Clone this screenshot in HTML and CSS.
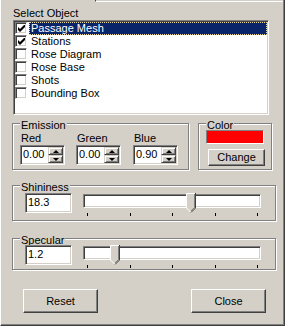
FILE: index.html
```html
<!DOCTYPE html>
<html lang="en">
<head>
  <meta charset="UTF-8" />
  <title>Material</title>
  <link rel="stylesheet" href="styles.css">
</head>
<body>

  <div class="dialog">
    <div class="tab-edge"></div>

    <div class="caption">Select Object</div>
    <div class="listbox">
      <div class="item">
        <span class="check"><svg viewBox="0 0 7 7" width="7" height="7"><polygon points="0,2 2,4 6,0 7,0 7,2 2,7 0,5" /></svg></span>
        <span class="item-label selected">Passage Mesh</span>
      </div>
      <div class="item">
        <span class="check"><svg viewBox="0 0 7 7" width="7" height="7"><polygon points="0,2 2,4 6,0 7,0 7,2 2,7 0,5" /></svg></span>
        <span class="item-label">Stations</span>
      </div>
      <div class="item"><span class="check"></span><span class="item-label">Rose Diagram</span></div>
      <div class="item"><span class="check"></span><span class="item-label">Rose Base</span></div>
      <div class="item"><span class="check"></span><span class="item-label">Shots</span></div>
      <div class="item"><span class="check"></span><span class="item-label">Bounding Box</span></div>
    </div>

    <div class="row">
      <div class="group emission">
        <div class="group-title">Emission</div>
        <div class="fields">
          <div class="field">
            <div class="field-label">Red</div>
            <div class="spin">
              <span class="spin-value">0.00</span>
              <span class="spin-btns"><span class="spin-btn up"></span><span class="spin-btn down"></span></span>
            </div>
          </div>
          <div class="field">
            <div class="field-label">Green</div>
            <div class="spin">
              <span class="spin-value">0.00</span>
              <span class="spin-btns"><span class="spin-btn up"></span><span class="spin-btn down"></span></span>
            </div>
          </div>
          <div class="field">
            <div class="field-label">Blue</div>
            <div class="spin">
              <span class="spin-value">0.90</span>
              <span class="spin-btns"><span class="spin-btn up"></span><span class="spin-btn down"></span></span>
            </div>
          </div>
        </div>
      </div>

      <div class="group color">
        <div class="group-title">Color</div>
        <div class="swatch"></div>
        <button class="btn change">Change</button>
      </div>
    </div>

    <div class="group slider-group shininess">
      <div class="group-title">Shininess</div>
      <div class="slider-row">
        <div class="edit">18.3</div>
        <div class="track">
          <div class="channel"></div>
          <div class="ticks"><i></i><i></i><i></i><i></i><i></i></div>
          <svg class="thumb" style="left: 103px" viewBox="0 0 10 20" width="10" height="20">
            <polygon points="0,0 10,0 10,15 5,20 0,15" fill="#d4d0c8" />
            <polyline points="0.5,15 0.5,0.5 9,0.5" stroke="#fff" fill="none" />
            <polyline points="0.5,15 5,19.5" stroke="#fff" fill="none" />
            <polyline points="9.5,0 9.5,15 5,19.5" stroke="#404040" fill="none" />
            <polyline points="8.5,1 8.5,14.5 5,18" stroke="#808080" fill="none" />
          </svg>
        </div>
      </div>
    </div>

    <div class="group slider-group specular">
      <div class="group-title">Specular</div>
      <div class="slider-row">
        <div class="edit">1.2</div>
        <div class="track">
          <div class="channel"></div>
          <div class="ticks"><i></i><i></i><i></i><i></i><i></i></div>
          <svg class="thumb" style="left: 27px" viewBox="0 0 10 20" width="10" height="20">
            <polygon points="0,0 10,0 10,15 5,20 0,15" fill="#d4d0c8" />
            <polyline points="0.5,15 0.5,0.5 9,0.5" stroke="#fff" fill="none" />
            <polyline points="0.5,15 5,19.5" stroke="#fff" fill="none" />
            <polyline points="9.5,0 9.5,15 5,19.5" stroke="#404040" fill="none" />
            <polyline points="8.5,1 8.5,14.5 5,18" stroke="#808080" fill="none" />
          </svg>
        </div>
      </div>
    </div>

    <div class="actions">
      <button class="btn action">Reset</button>
      <button class="btn action">Close</button>
    </div>
  </div>

</body>
</html>
```

FILE: styles.css
```css
* {
  box-sizing: border-box;
}
body {
  margin: 0;
  background: #d4d0c8;
  font-family: 'Liberation Sans', Arial, sans-serif;
  font-size: 11px;
  color: #000;
}
.dialog {
  width: 285px;
  height: 326px;
  border-left: 1px solid #fff;
  border-right: 1px solid #404040;
  border-bottom: 1px solid #404040;
  box-shadow: inset -1px -1px #808080;
  padding-left: 11px;
}
.tab-edge {
  height: 2px;
  margin: 0 1px 0 83px;
  border-left: 1px solid #404040;
  border-bottom: 1px solid #fff;
}
.caption {
  margin: 5px 0 0 1px;
  line-height: 13px;
}

/* sunken white boxes */
.listbox, .spin, .edit, .channel, .check {
  background: #fff;
  border: 1px solid;
  border-color: #808080 #fff #fff #808080;
  box-shadow: inset 1px 1px #404040, inset -1px -1px #d4d0c8;
}

.listbox {
  width: 256px;
  height: 95px;
  margin-left: 1px;
  padding: 1px;
}
.item {
  display: flex;
  gap: 2px;
  height: 13px;
}
.check {
  flex: none;
  width: 12px;
  height: 12px;
  display: flex;
  align-items: center;
  justify-content: center;
}
.check svg {
  fill: #000;
}
.item-label {
  flex: 1;
  height: 13px;
  border: 1px dotted transparent;
  padding-left: 1px;
  line-height: 11px;
  white-space: nowrap;
}
.item-label.selected {
  background: #0a246a;
  color: #fff;
  border-color: #f0dc98;
}

/* group boxes */
.row {
  display: flex;
  gap: 9px;
  margin-top: 8px;
}
.group {
  border: 1px solid #808080;
  box-shadow: inset 1px 1px #fff, 1px 1px #fff;
}
.group-title {
  width: fit-content;
  margin: -5px 0 0 7px;
  padding: 0 1px;
  background: #d4d0c8;
  line-height: 13px;
}
.emission {
  width: 177px;
  height: 47px;
  padding: 0 0 4px 7px;
}
.emission .group-title {
  margin-left: 0;
}
.color {
  width: 74px;
  height: 47px;
  padding: 0 0 3px 7px;
}
.color .group-title {
  margin-left: 0;
}

.fields {
  display: grid;
  grid-template-columns: 56px 57px 45px;
}
.field-label {
  padding-left: 1px;
  line-height: 13px;
}
.spin {
  display: flex;
  width: 45px;
  height: 20px;
  padding: 1px;
}
.spin-value {
  flex: 1;
  padding: 1px 0 0 1px;
  line-height: 13px;
}
.spin-btns {
  display: flex;
  flex-direction: column;
  width: 15px;
}
.spin-btn {
  flex: 1;
  display: flex;
  align-items: center;
  justify-content: center;
  background: #d4d0c8;
  border: 1px solid;
  border-color: #d4d0c8 #404040 #404040 #d4d0c8;
  box-shadow: inset 1px 1px #fff, inset -1px -1px #808080;
}
.spin-btn::after {
  content: "";
  width: 0;
  height: 0;
  border-left: 3px solid transparent;
  border-right: 3px solid transparent;
}
.spin-btn.up::after {
  border-bottom: 3px solid #000;
}
.spin-btn.down::after {
  border-top: 3px solid #000;
}

.swatch {
  width: 58px;
  height: 14px;
  margin-top: -2px;
  background: #ff0000;
  border: 1px solid;
  border-color: #808080 #fff #fff #808080;
}

.btn {
  display: flex;
  align-items: center;
  justify-content: center;
  padding: 0;
  font: inherit;
  color: #000;
  background: #d4d0c8;
  border: 1px solid;
  border-color: #fff #404040 #404040 #fff;
  box-shadow: inset -1px -1px #808080;
  line-height: 13px;
}
.change {
  width: 57px;
  height: 17px;
  margin: 5px 0 0 2px;
}

/* sliders */
.slider-group {
  width: 264px;
}
.shininess {
  height: 36px;
  margin-top: 15px;
  padding-bottom: 4px;
}
.shininess .slider-row {
  margin-top: -1px;
}
.specular {
  height: 32px;
  margin-top: 17px;
  padding-bottom: 1px;
}
.specular .slider-row {
  margin-top: -2px;
}
.slider-row {
  display: flex;
  align-items: flex-start;
  gap: 11px;
  padding-left: 12px;
}
.edit {
  width: 47px;
  height: 20px;
  padding: 2px 0 0 2px;
  line-height: 13px;
}
.track {
  position: relative;
  width: 178px;
  padding-top: 1px;
}
.channel {
  height: 14px;
}
.ticks {
  display: flex;
  justify-content: space-between;
  height: 3px;
  margin-top: 5px;
  padding: 0 3px 0 4px;
}
.ticks i {
  width: 1px;
  height: 3px;
  background: #000;
}
.thumb {
  position: absolute;
  top: 0;
}

.actions {
  display: flex;
  gap: 93px;
  margin: 19px 0 0 11px;
}
.action {
  width: 75px;
  height: 24px;
}
```
